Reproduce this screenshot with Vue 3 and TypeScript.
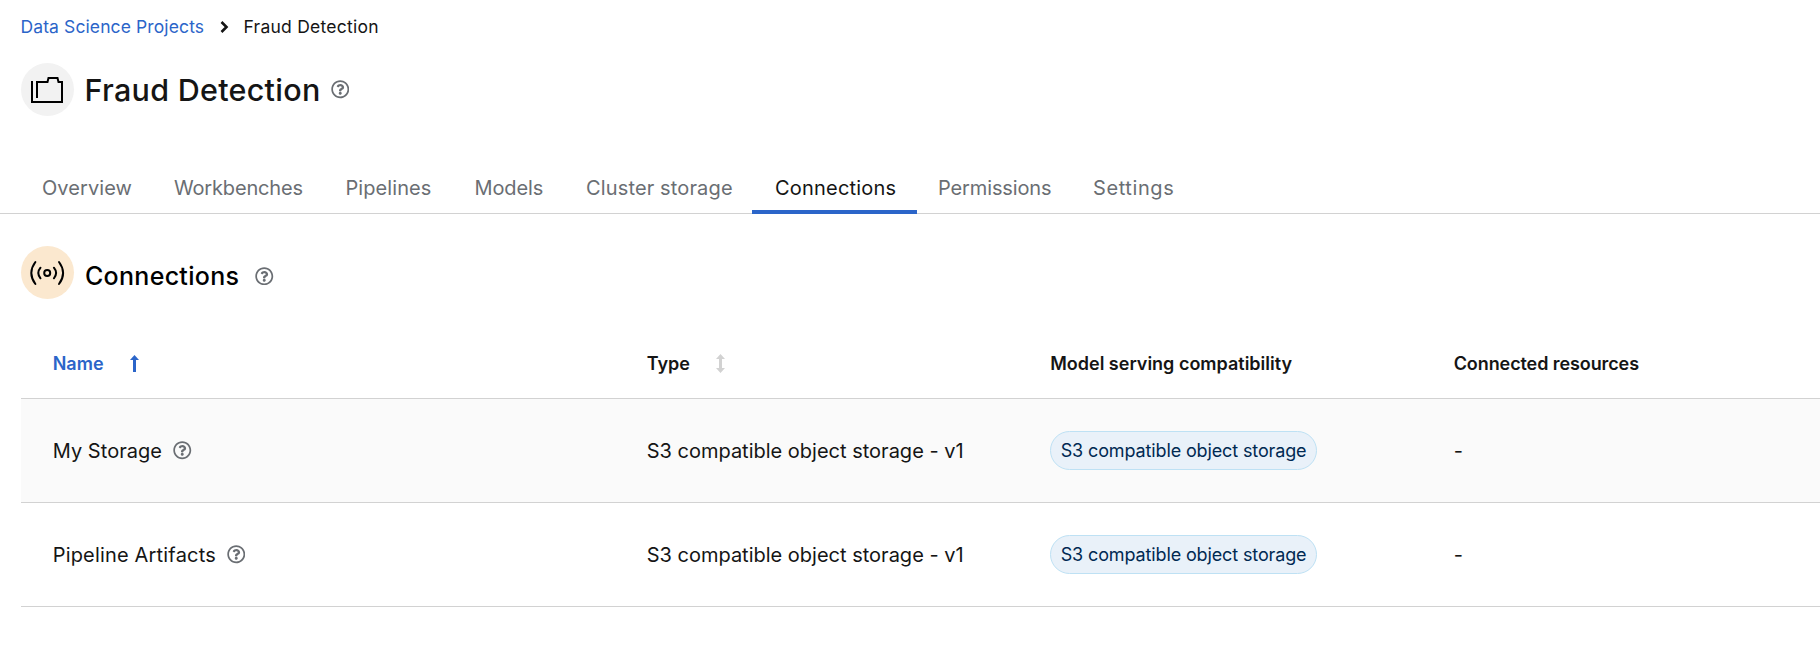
<script setup lang="ts">
import { h } from 'vue'

interface Tab {
  label: string
  fit: string
}
interface Connection {
  name: string
  fit: string
  type: string
  compatibility: string
  resources: string
}

const active = 'Connections'
const tabs: Tab[] = [
  { label: 'Overview', fit: 'overview' },
  { label: 'Workbenches', fit: 'workbenches' },
  { label: 'Pipelines', fit: 'pipelines' },
  { label: 'Models', fit: 'models' },
  { label: 'Cluster storage', fit: 'storage' },
  { label: 'Connections', fit: 'connections' },
  { label: 'Permissions', fit: 'permissions' },
  { label: 'Settings', fit: 'settings' },
]
const connections: Connection[] = [
  { name: 'My Storage', fit: 'short', type: 'S3 compatible object storage - v1', compatibility: 'S3 compatible object storage', resources: '-' },
  { name: 'Pipeline Artifacts', fit: 'long', type: 'S3 compatible object storage - v1', compatibility: 'S3 compatible object storage', resources: '-' },
]

// Outlined circle with a question mark
const HelpIcon = () =>
  h('svg', { viewBox: '0 0 512 512', width: 18.5, height: 18.5, fill: '#6a6e73', 'aria-hidden': 'true' }, [
    h('path', {
      d: 'M256 8C119.043 8 8 119.083 8 256c0 136.997 111.043 248 248 248s248-111.003 248-248C504 119.083 392.957 8 256 8zm0 448c-110.532 0-200-89.431-200-200 0-110.495 89.472-200 200-200 110.491 0 200 89.471 200 200 0 110.53-89.431 200-200 200zm107.244-255.2c0 67.052-72.421 68.084-72.421 92.863V300c0 6.627-5.373 12-12 12h-45.647c-6.627 0-12-5.373-12-12v-8.659c0-35.745 27.1-50.034 47.579-61.516 17.561-9.845 28.324-16.541 28.324-29.579 0-17.246-21.999-28.693-39.784-28.693-23.189 0-33.894 10.977-48.942 29.969-4.057 5.12-11.46 6.071-16.666 2.124l-27.824-21.098c-5.107-3.872-6.251-11.066-2.644-16.363C184.846 131.491 214.94 112 261.794 112c49.071 0 101.45 38.304 101.45 88.8zM298 368c0 23.159-18.841 42-42 42s-42-18.841-42-42 18.841-42 42-42 42 18.841 42 42z',
    }),
  ])
</script>

<template>
  <main class="page">
    <nav class="breadcrumb" aria-label="Breadcrumb">
      <a class="crumb-link">Data Science Projects</a>
      <svg class="chevron" width="9" height="12" viewBox="0 0 9 12" aria-hidden="true">
        <path d="M1.5 1 6.5 6 1.5 11" fill="none" stroke="#151515" stroke-width="2.6" />
      </svg>
      <span class="crumb-current">Fraud Detection</span>
    </nav>

    <header class="title-row">
      <span class="badge project">
        <svg width="53" height="53" viewBox="0 0 53 53" fill="none" stroke="#000" stroke-width="2" aria-hidden="true">
          <path d="M11 18v21h30V19h-3.5l-1-4h-9l-1 4H16v16" />
        </svg>
      </span>
      <h1>Fraud Detection</h1>
      <HelpIcon class="help" />
    </header>

    <div class="tabs" role="tablist">
      <button
        v-for="tab in tabs"
        :key="tab.label"
        type="button"
        role="tab"
        :class="['tab', tab.fit, { active: tab.label === active }]"
      >{{ tab.label }}</button>
    </div>

    <section class="section-title">
      <span class="badge connection">
        <svg width="53" height="53" viewBox="0 0 53 53" fill="none" stroke="#000" stroke-width="2" stroke-linecap="round" aria-hidden="true">
          <circle cx="26.2" cy="27" r="3" />
          <path d="M19.5 21.7q-4.4 5.3 0 10.6M32.9 21.7q4.4 5.3 0 10.6M14.4 16q-8.2 11 0 22M38 16q8.2 11 0 22" />
        </svg>
      </span>
      <h2>Connections</h2>
      <HelpIcon class="help" />
    </section>

    <div class="table" role="table">
      <div class="row head" role="row">
        <span class="cell sorted">
          <span class="name-label">Name</span>
          <svg width="9" height="17" viewBox="0 0 9 17" aria-hidden="true">
            <path d="M4.5 2v15" stroke="#2b65c9" stroke-width="3" />
            <path d="M4.5 0 9 5H0z" fill="#2b65c9" />
          </svg>
        </span>
        <span class="cell sortable">
          <span>Type</span>
          <svg width="9" height="19" viewBox="0 0 9 19" aria-hidden="true">
            <path d="M4.5 2v15" stroke="#d2d2d2" stroke-width="3" />
            <path d="M4.5 0 9 5H0zM4.5 19 9 14H0z" fill="#d2d2d2" />
          </svg>
        </span>
        <span class="cell">Model serving compatibility</span>
        <span class="cell resources">Connected resources</span>
      </div>
      <div v-for="item in connections" :key="item.name" class="row body" role="row">
        <span class="cell name">
          <span :class="item.fit">{{ item.name }}</span>
          <HelpIcon class="help" />
        </span>
        <span class="cell type">{{ item.type }}</span>
        <span class="cell"><span class="label">{{ item.compatibility }}</span></span>
        <span class="cell">{{ item.resources }}</span>
      </div>
    </div>
  </main>
</template>

<style>
body {
  margin: 0;
  background: #fff;
}
</style>

<style scoped>
.page {
  height: 660px;
  overflow: hidden;
  box-sizing: border-box;
  font-family: Inter, 'Liberation Sans', sans-serif;
  color: #151515;
  white-space: nowrap;
}
svg {
  display: block;
  flex: none;
}
.breadcrumb {
  display: flex;
  align-items: center;
  height: 22px;
  padding: 16px 0 0 20.5px;
  font-size: 17.5px;
  line-height: 22px;
}
.crumb-link {
  width: 199px;
  color: #2b65c9;
  letter-spacing: 0.11px;
}
.chevron {
  width: 9px;
}
.crumb-current {
  margin-left: 15px;
  letter-spacing: 0.25px;
}
.title-row {
  display: flex;
  align-items: center;
  height: 53px;
  padding: 25px 0 0 21px;
}
.badge {
  width: 53px;
  height: 53px;
  flex: none;
  border-radius: 50%;
}
.project {
  background: #f2f2f2;
}
.connection {
  background: #fbe8cf;
}
h1 {
  width: 246px;
  margin: 0 0 0 10.5px;
  font-size: 30.5px;
  line-height: 40px;
  font-weight: 550;
  letter-spacing: 0.28px;
}
.tabs {
  display: flex;
  height: 52px;
  box-sizing: border-box;
  margin-top: 46px;
  padding-left: 21px;
  border-bottom: 1px solid #d2d2d2;
}
.tab {
  height: 52px;
  box-sizing: border-box;
  padding: 0 0 1px 21px;
  border: 0;
  background: none;
  color: #6a6e73;
  font: 400 20px/24px Inter, 'Liberation Sans', sans-serif;
  text-align: left;
}
.tab.active {
  color: #151515;
  border-bottom: 4px solid #2b65c9;
  padding-top: 3px;
  padding-bottom: 0;
}
.overview { width: 132px; letter-spacing: 0.07px; }
.workbenches { width: 171.5px; letter-spacing: -0.16px; }
.pipelines { width: 129px; letter-spacing: 0.08px; }
.models { width: 111.5px; letter-spacing: -0.1px; }
.storage { width: 187px; letter-spacing: 0.14px; }
.connections { width: 165px; padding-left: 23px; letter-spacing: 0.2px; }
.permissions { width: 155px; letter-spacing: -0.13px; }
.settings { width: 124px; letter-spacing: 0.6px; }
.section-title {
  display: flex;
  align-items: center;
  height: 53px;
  padding: 32px 0 0 21px;
}
h2 {
  width: 170px;
  margin: 6px 0 0 11px;
  font-size: 25px;
  line-height: 32px;
  font-weight: 500;
  letter-spacing: 0.29px;
  color: #000;
}
.section-title .help {
  margin-top: 7px;
}
.table {
  margin: 30px 0 0 21px;
}
.row {
  display: grid;
  grid-template-columns: 594px 403.5px 403.5px 1fr;
  padding-left: 31.7px;
  border-bottom: 1px solid #d2d2d2;
}
.head {
  height: 69px;
  font-size: 18px;
  font-weight: 600;
}
.body {
  height: 103px;
  font-size: 20px;
}
.body:nth-child(2) {
  background: #fafafa;
}
.cell {
  display: flex;
  align-items: center;
}
.sorted {
  color: #2b65c9;
  gap: 26.5px;
}
.sortable {
  gap: 26.5px;
}
.resources {
  letter-spacing: -0.09px;
}
.name {
  gap: 11px;
}
.short {
  letter-spacing: 0.05px;
}
.long {
  letter-spacing: 0.18px;
}
.type {
  letter-spacing: 0;
}
.label {
  box-sizing: border-box;
  width: 267px;
  height: 39px;
  padding-left: 9.5px;
  border: 1px solid #bee1f4;
  border-radius: 20px;
  background: #e9f1f9;
  color: #002952;
  font-size: 18px;
  line-height: 38px;
  letter-spacing: -0.13px;
}
</style>
